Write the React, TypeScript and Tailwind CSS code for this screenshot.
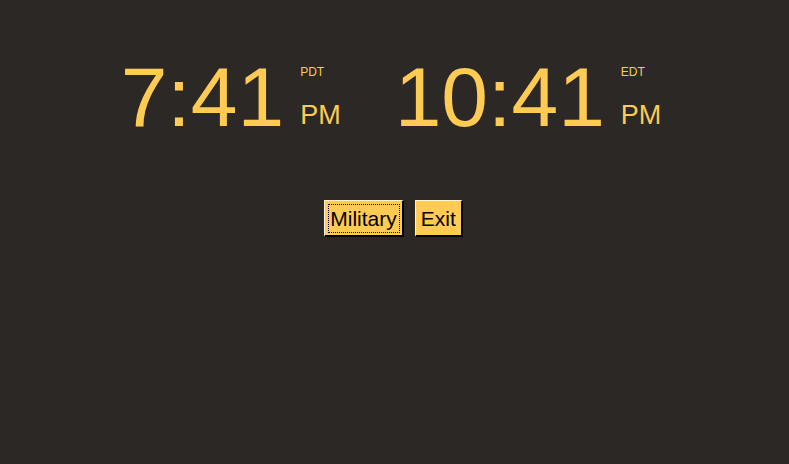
import React from 'react';

const font = { fontFamily: '"Liberation Sans", Arial, sans-serif' };

const Clock: React.FC<{ time: string; zone: string; ampm: string }> = ({ time, zone, ampm }) => (
  <div className="flex items-stretch">
    <div className="text-[84px] leading-none text-[#ffcb52] mr-[16px]">{time}</div>
    <div className="flex flex-col justify-between text-[#ffcb52] pt-[11px] pb-[10px]">
      <div className="text-[12px] leading-none">{zone}</div>
      <div className="text-[27px] leading-none">{ampm}</div>
    </div>
  </div>
);

export default function App() {
  return (
    <div className="w-[789px] h-[464px] bg-[#2c2826] flex flex-col items-center" style={font}>
      <div className="flex gap-[54px] pt-[55px] pr-[7px]">
        <Clock time="7:41" zone="PDT" ampm="PM" />
        <Clock time="10:41" zone="EDT" ampm="PM" />
      </div>
      <div className="flex gap-[11px] mt-[61px] pr-[2px]">
        <button className="h-[37px] px-[5px] bg-[#ffcb52] text-black text-[21px] leading-none border border-t-[#fff3c8] border-l-[#fff3c8] border-b-black border-r-black border-b-2 border-r-2 outline-1 outline-dotted outline-black outline-offset-[-5px]">
          Military
        </button>
        <button className="h-[37px] px-[5px] bg-[#ffcb52] text-black text-[21px] leading-none border border-t-[#fff3c8] border-l-[#fff3c8] border-b-black border-r-black border-b-2 border-r-2">
          Exit
        </button>
      </div>
    </div>
  );
}
